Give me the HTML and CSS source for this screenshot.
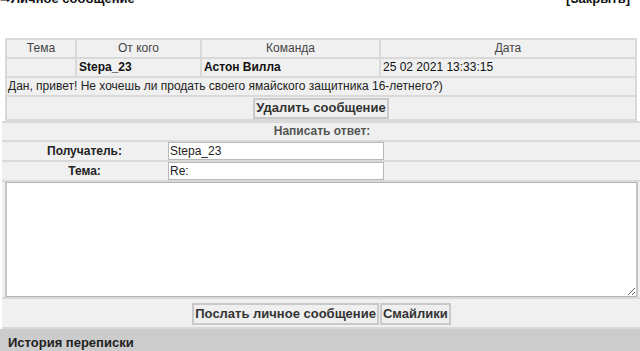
FILE: index.html
```html
<!DOCTYPE html>
<html>
<head>
<meta charset="utf-8">
<link rel="stylesheet" href="styles.css">
</head>
<body>
<div class="titlebar">
  <span class="title">⇒Личное сообщение</span>
  <span class="close">[Закрыть]</span>
</div>
<table class="msg">
  <colgroup><col class="c1"><col class="c2"><col class="c3"><col class="c4"></colgroup>
  <tr class="head"><td>Тема</td><td>От кого</td><td>Команда</td><td>Дата</td></tr>
  <tr><td></td><td class="b">Stepa_23</td><td class="b">Астон Вилла</td><td>25 02 2021 13:33:15</td></tr>
  <tr><td colspan="4" class="text">Дан, привет! Не хочешь ли продать своего ямайского защитника 16-летнего?)</td></tr>
  <tr><td colspan="4" class="btncell"><button class="btn">Удалить сообщение</button></td></tr>
</table>
<table class="reply">
  <colgroup><col class="lc"><col></colgroup>
  <tr><td colspan="2" class="rhead">Написать ответ:</td></tr>
  <tr><td class="lab">Получатель:</td><td class="inp"><input class="field" value="Stepa_23"></td></tr>
  <tr><td class="lab">Тема:</td><td class="inp"><input class="field" value="Re:"></td></tr>
  <tr><td colspan="2" class="tacell"><textarea class="ta"></textarea></td></tr>
  <tr><td colspan="2" class="btns"><button class="btn">Послать личное сообщение</button><button class="btn">Смайлики</button></td></tr>
</table>
<div class="history">История переписки</div>
</body>
</html>
```
FILE: styles.css
```css
html, body { margin: 0; padding: 0; }
body {
  font-family: "Liberation Sans", Arial, sans-serif;
  font-size: 12px;
  color: #111;
  background: #fff;
  overflow: hidden;
  width: 640px;
}
.titlebar {
  display: flex;
  justify-content: space-between;
  margin-top: -9px;
  line-height: 16px;
  font-weight: bold;
  font-size: 13px;
  color: #111;
  padding: 0 10px 0 0;
}
.msg {
  margin: 31px 0 0 5px;
  width: 632px;
  border-spacing: 2px;
  background: #d9d9d9;
  table-layout: fixed;
}
.msg td {
  background: #f0f0f0;
  height: 17px;
  line-height: 17px;
  padding: 0 2px;
  white-space: nowrap;
}
.c1 { width: 68px; }
.c2 { width: 123px; }
.c3 { width: 177px; }
.msg .head td { text-align: center; color: #444; }
.msg td.b { font-weight: bold; color: #111; }
.msg td.text { padding: 0 0 0 1px; color: #222; }
.msg td.btncell { text-align: center; height: 22px; line-height: 20px; padding: 0; }
.btn {
  font-family: "Liberation Sans", Arial, sans-serif;
  font-size: 13px;
  font-weight: bold;
  color: #333;
  background: #efefef;
  border: 2px solid #c9c9c9;
  padding: 0 1px;
  height: 21px;
  margin: 0;
  line-height: 16px;
  vertical-align: middle;
}
.reply {
  margin: 0 0 0 2px;
  width: 640px;
  border-spacing: 0 2px;
  background: #d9d9d9;
  table-layout: fixed;
}
.lc { width: 165px; }
.reply td { background: #f0f0f0; padding: 0; }
.rhead {
  text-align: center;
  font-weight: bold;
  color: #555;
  height: 17px;
  line-height: 17px;
}
.lab {
  text-align: center;
  font-weight: bold;
  color: #222;
  height: 18px;
}
.inp { padding: 0 0 0 1px !important; }
.field {
  display: block;
  width: 216px;
  height: 18px;
  box-sizing: border-box;
  border: 1px solid #b8b8b8;
  font-family: "Liberation Sans", Arial, sans-serif;
  font-size: 12px;
  padding: 0 1px;
  color: #222;
  margin: 0;
}
.tacell { padding: 0 0 0 3px !important; }
.ta {
  display: block;
  box-sizing: border-box;
  width: 633px;
  height: 115px;
  border: 1px solid #b5b5b5;
  border-left: 2px solid #c4c4c4;
  border-right: 2px solid #c4c4c4;
  margin: 0;
  resize: both;
}
.btns { text-align: center; padding: 4px 0 2px !important; }
.btns .btn { vertical-align: top; margin-right: 1px; height: 22px; }
.history {
  background: #cccccc;
  font-weight: bold;
  color: #222;
  height: 22px;
  line-height: 28px;
  padding-left: 8px;
  font-size: 13px;
}
```
